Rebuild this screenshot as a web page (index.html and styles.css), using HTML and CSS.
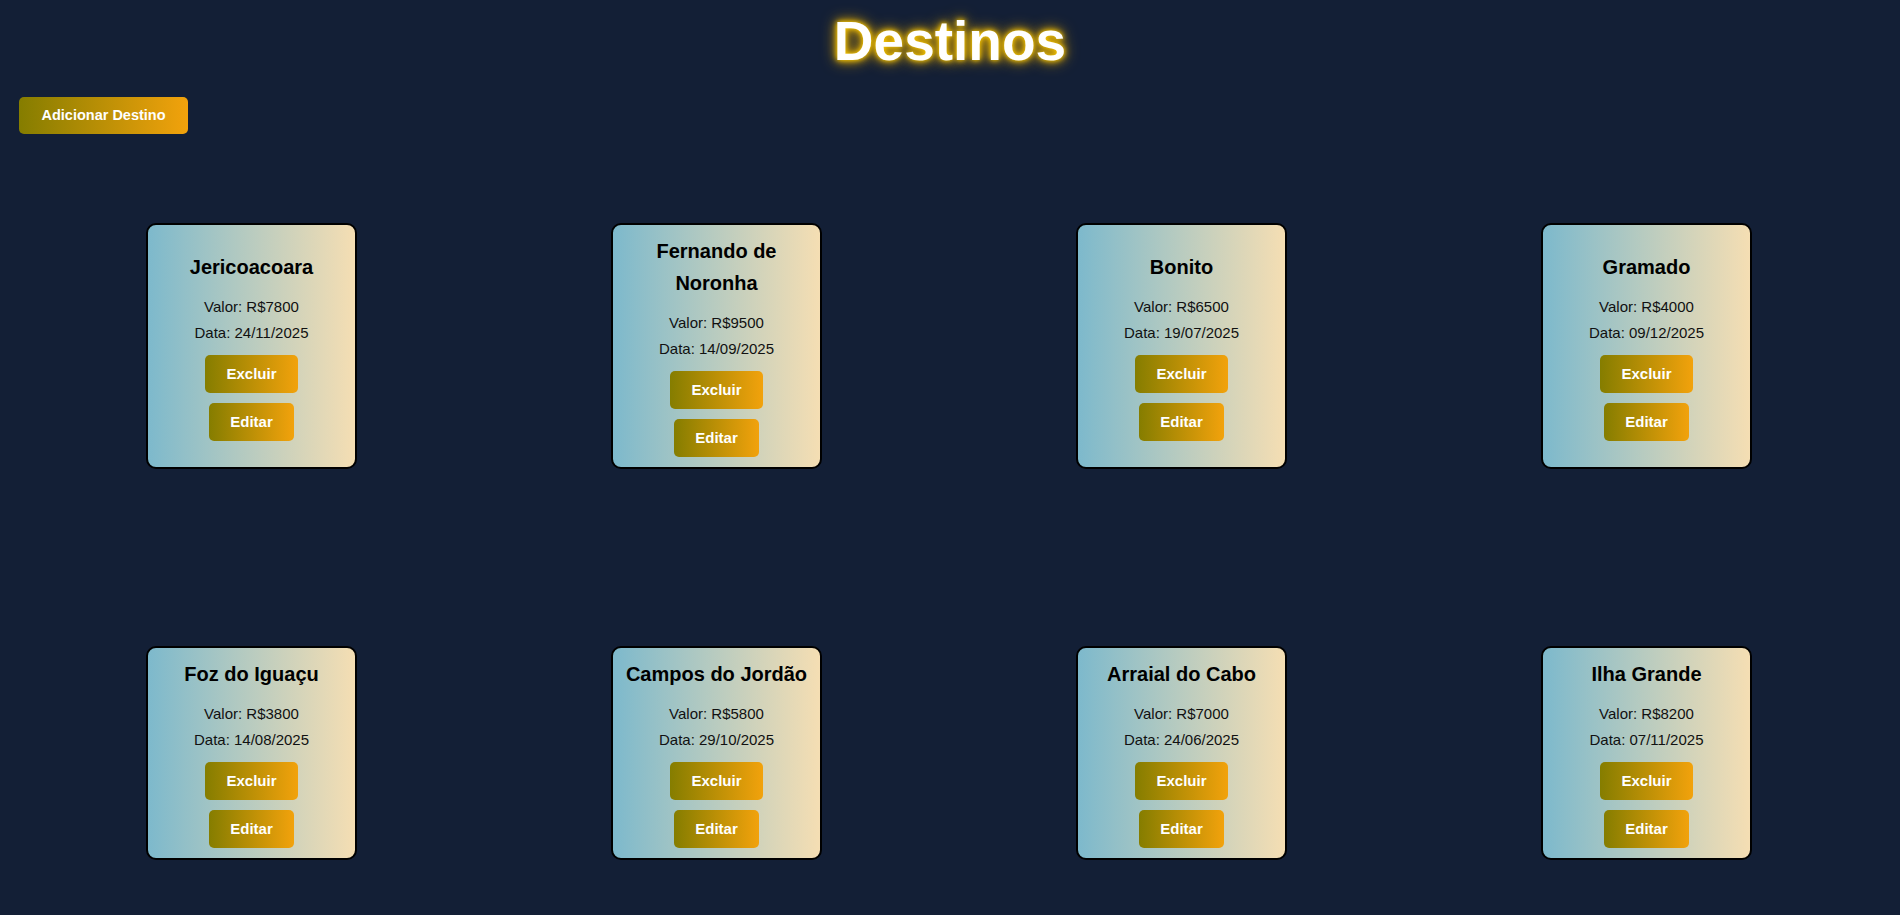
FILE: index.html
```html
<!DOCTYPE html>
<html lang="pt-BR">
<head>
<meta charset="utf-8">
<title>Destinos</title>
<link rel="stylesheet" href="styles.css">
</head>
<body>
  <header class="topo">
    <h1 class="titulo">Destinos</h1>
  </header>
  <div class="acoes">
    <button class="btn btn-add">Adicionar Destino</button>
  </div>
  <main class="grade">
    <div class="card">
      <h3>Jericoacoara</h3>
      <p>Valor: R$7800</p>
      <p>Data: 24/11/2025</p>
      <button class="btn">Excluir</button>
      <button class="btn">Editar</button>
    </div>
    <div class="card">
      <h3>Fernando de Noronha</h3>
      <p>Valor: R$9500</p>
      <p>Data: 14/09/2025</p>
      <button class="btn">Excluir</button>
      <button class="btn">Editar</button>
    </div>
    <div class="card">
      <h3>Bonito</h3>
      <p>Valor: R$6500</p>
      <p>Data: 19/07/2025</p>
      <button class="btn">Excluir</button>
      <button class="btn">Editar</button>
    </div>
    <div class="card">
      <h3>Gramado</h3>
      <p>Valor: R$4000</p>
      <p>Data: 09/12/2025</p>
      <button class="btn">Excluir</button>
      <button class="btn">Editar</button>
    </div>
    <div class="card">
      <h3>Foz do Iguaçu</h3>
      <p>Valor: R$3800</p>
      <p>Data: 14/08/2025</p>
      <button class="btn">Excluir</button>
      <button class="btn">Editar</button>
    </div>
    <div class="card">
      <h3>Campos do Jordão</h3>
      <p>Valor: R$5800</p>
      <p>Data: 29/10/2025</p>
      <button class="btn">Excluir</button>
      <button class="btn">Editar</button>
    </div>
    <div class="card">
      <h3>Arraial do Cabo</h3>
      <p>Valor: R$7000</p>
      <p>Data: 24/06/2025</p>
      <button class="btn">Excluir</button>
      <button class="btn">Editar</button>
    </div>
    <div class="card">
      <h3>Ilha Grande</h3>
      <p>Valor: R$8200</p>
      <p>Data: 07/11/2025</p>
      <button class="btn">Excluir</button>
      <button class="btn">Editar</button>
    </div>
  </main>
</body>
</html>
```

FILE: styles.css
```css
* { box-sizing: border-box; }

body {
  margin: 0;
  background: #131f36;
  font-family: "Liberation Sans", Arial, sans-serif;
  line-height: 1.6;
  color: #000;
  overflow: hidden;
}

.topo {
  display: flex;
  justify-content: center;
  padding-top: 10px;
}

.titulo {
  margin: 0;
  font-size: 55px;
  line-height: 62px;
  font-weight: bold;
  color: #fff;
  text-shadow: 0 0 5px #ffd000, 0 0 10px #f0b400, 0 0 16px #c89600;
}

.acoes {
  padding: 25px 19px 0;
}

.btn {
  display: block;
  border: none;
  border-radius: 5px;
  background: linear-gradient(to right, #857d00, #f2a20c);
  color: #fff;
  font-family: "Liberation Sans", Arial, sans-serif;
  font-weight: bold;
  font-size: 15px;
  line-height: 18px;
  padding: 10px 21px;
  cursor: pointer;
}

.btn-add {
  font-size: 14.5px;
  line-height: 17px;
  padding: 10px 22.5px;
}

.grade {
  display: grid;
  grid-template-columns: repeat(4, 1fr);
  justify-items: center;
  row-gap: 177px;
  padding: 89px 21px 0 19px;
}

.card {
  width: 211px;
  display: flex;
  flex-direction: column;
  align-items: center;
  justify-content: center;
  text-align: center;
  padding: 10px 10px;
  border: 2px solid #000;
  border-radius: 10px;
  background: linear-gradient(to right, #7db9cc, #f5deb3);
}

.card h3 {
  margin: 0 0 11px;
  font-size: 20px;
  line-height: 32px;
  font-weight: bold;
  color: #000;
}

.card p {
  margin: 0;
  font-size: 15px;
  line-height: 25.6px;
  color: #111;
}

.card .btn {
  margin-top: 10px;
}
```
